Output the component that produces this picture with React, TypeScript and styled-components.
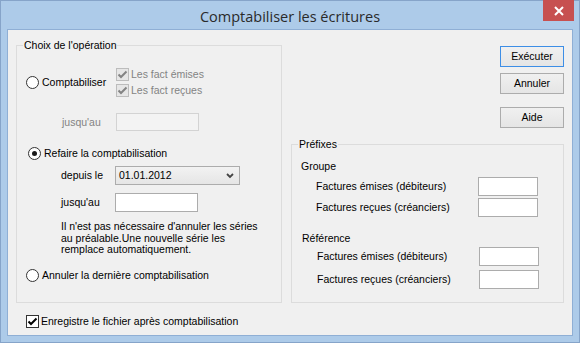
import React from 'react'
import styled, { createGlobalStyle } from 'styled-components'

const GlobalStyle = createGlobalStyle`
  html, body {
    margin: 0;
    padding: 0;
    background: #ffffff;
  }
  body {
    font-family: "Liberation Sans", Arial, sans-serif;
    font-size: 10.5px;
    color: #000;
  }
  * {
    box-sizing: border-box;
  }
`

const Window = styled.div`
  width: 580px;
  height: 343px;
  border: 1px solid #86a4c9;
  background: #adcbe9;
  padding: 0 6px 6px;
  display: flex;
  flex-direction: column;
`

const TitleBar = styled.div`
  position: relative;
  height: 28px;
  margin: 0 -6px;
  padding-top: 3px;
  display: flex;
  align-items: center;
  justify-content: center;
  font-family: "Open Sans", "Noto Sans", sans-serif;
  font-size: 14.5px;
  color: #2a2a2a;
`

const CloseButton = styled.div`
  position: absolute;
  top: -1px;
  right: 5px;
  width: 31px;
  height: 21px;
  background: #c75050;
  display: flex;
  align-items: center;
  justify-content: center;
`

const Body = styled.div`
  flex: 1;
  border: 1px solid #8fafd5;
  background: #f0f0f0;
  display: grid;
  grid-template-columns: 266px 273px;
  grid-template-rows: 258px auto;
  column-gap: 9px;
  padding: 15px 0 0 8px;
`

const GroupBox = styled.div<{ $padTop: number }>`
  position: relative;
  border: 1px solid #dcdcdc;
  padding-top: ${p => p.$padTop}px;
  display: flex;
  flex-direction: column;
`

const Caption = styled.span`
  position: absolute;
  top: -7px;
  left: 6px;
  padding: 0 1px;
  line-height: 13px;
  background: #f0f0f0;
`

const Row = styled.div<{ $mt?: number; $pl?: number; $h?: number }>`
  display: flex;
  align-items: center;
  margin-top: ${p => p.$mt ?? 0}px;
  padding-left: ${p => p.$pl ?? 0}px;
  height: ${p => p.$h ?? 16}px;
  line-height: 13px;
  white-space: nowrap;
`

const ChoiceCell = styled.div<{ $w: number; $pl: number }>`
  width: ${p => p.$w}px;
  padding-left: ${p => p.$pl}px;
  display: flex;
  align-items: center;
`

const CheckColumn = styled.div`
  display: flex;
  flex-direction: column;
`

const Label = styled.span<{ $w?: number; $disabled?: boolean }>`
  display: inline-block;
  width: ${p => (p.$w ? `${p.$w}px` : 'auto')};
  color: ${p => (p.$disabled ? '#838383' : '#000')};
  line-height: 13px;
`

const RadioCircle = styled.span<{ $checked?: boolean }>`
  width: 13px;
  height: 13px;
  border-radius: 50%;
  border: 1px solid #333;
  background: #fff;
  margin-right: 3px;
  display: flex;
  align-items: center;
  justify-content: center;
  flex: none;
  &::after {
    content: '';
    display: ${p => (p.$checked ? 'block' : 'none')};
    width: 5px;
    height: 5px;
    border-radius: 50%;
    background: #1a1a1a;
  }
`

const CheckBoxSquare = styled.span<{ $disabled?: boolean }>`
  width: 13px;
  height: 13px;
  border: 1px solid ${p => (p.$disabled ? '#bcbcbc' : '#333')};
  background: ${p => (p.$disabled ? '#e6e6e6' : '#fff')};
  margin-right: 2px;
  display: flex;
  align-items: center;
  justify-content: center;
  flex: none;
`

const TextBox = styled.div<{ $w: number; $disabled?: boolean }>`
  width: ${p => p.$w}px;
  height: 100%;
  border: 1px solid ${p => (p.$disabled ? '#d3d3d3' : '#acacac')};
  background: ${p => (p.$disabled ? '#f3f3f3' : '#fff')};
`

const Select = styled.div`
  width: 125px;
  height: 100%;
  border: 1px solid #acacac;
  background: linear-gradient(#f2f2f2, #e5e5e5);
  display: flex;
  align-items: center;
  justify-content: space-between;
  padding: 0 5px 0 3px;
`

const Note = styled.div`
  margin-top: 9px;
  padding-left: 44px;
  line-height: 11.7px;
  white-space: nowrap;
`

const RightColumn = styled.div`
  display: flex;
  flex-direction: column;
  align-items: flex-end;
`

const Button = styled.div<{ $mt: number; $focused?: boolean }>`
  width: 64px;
  height: 21px;
  margin-top: ${p => p.$mt}px;
  border: 1px solid ${p => (p.$focused ? '#3d8ee6' : '#acacac')};
  background: linear-gradient(#f0f0f0, #e5e5e5);
  display: flex;
  align-items: center;
  justify-content: center;
  line-height: 13px;
`

const PrefixBox = styled(GroupBox)`
  align-self: stretch;
  flex: 1;
  margin-top: 16px;
`

const SubTitle = styled.div<{ $mt: number; $pl: number }>`
  margin-top: ${p => p.$mt}px;
  padding-left: ${p => p.$pl}px;
  line-height: 13px;
`

const SaveRow = styled(Row)`
  grid-column: 1 / span 2;
  margin-top: 10px;
  padding-left: 10px;
`

const Check = ({ color }: { color: string }) => (
  <svg width="11" height="11" viewBox="0 0 11 11">
    <path d="M1.5 5.5 L4 8 L9.5 2.5" fill="none" stroke={color} strokeWidth="2" />
  </svg>
)

const Radio = ({ checked, label, pl }: { checked?: boolean; label: string; pl: number }) => (
  <Row $pl={pl}>
    <RadioCircle $checked={checked} />
    <Label>{label}</Label>
  </Row>
)

const CheckBox = ({ label, disabled }: { label: string; disabled?: boolean }) => (
  <Row>
    <CheckBoxSquare $disabled={disabled}>
      <Check color={disabled ? '#838383' : '#000'} />
    </CheckBoxSquare>
    <Label $disabled={disabled}>{label}</Label>
  </Row>
)

const PrefixRow = ({ label, mt, pl }: { label: string; mt: number; pl: number }) => (
  <Row $mt={mt} $pl={pl} $h={19}>
    <Label $w={162}>{label}</Label>
    <TextBox $w={60} />
  </Row>
)

const PrefixGroup = ({ title, mt, shift }: { title: string; mt: number; shift: number }) => (
  <>
    <SubTitle $mt={mt} $pl={9 + shift}>{title}</SubTitle>
    <PrefixRow label="Factures émises (débiteurs)" mt={4 - shift * 2} pl={24 + shift} />
    <PrefixRow label="Factures reçues (créanciers)" mt={shift ? 4 : 2} pl={24 + shift} />
  </>
)

export default function App() {
  return (
    <>
      <GlobalStyle />
      <Window>
        <TitleBar>
          Comptabiliser les écritures
          <CloseButton>
            <svg width="10" height="10" viewBox="0 0 10 10">
              <path d="M1 1 L9 9 M9 1 L1 9" stroke="#fff" strokeWidth="2" />
            </svg>
          </CloseButton>
        </TitleBar>
        <Body>
          <GroupBox $padTop={20}>
            <Caption>Choix de l'opération</Caption>
            <Row $h={32}>
              <ChoiceCell $w={99} $pl={9}>
                <RadioCircle />
                <Label>Comptabiliser</Label>
              </ChoiceCell>
              <CheckColumn>
                <CheckBox label="Les fact émises" disabled />
                <CheckBox label="Les fact reçues" disabled />
              </CheckColumn>
            </Row>
            <Row $mt={15} $pl={45} $h={18}>
              <Label $w={54} $disabled>jusqu'au</Label>
              <TextBox $w={83} $disabled />
            </Row>
            <Row $mt={14}>
              <ChoiceCell $w={200} $pl={11}>
                <RadioCircle $checked />
                <Label>Refaire la comptabilisation</Label>
              </ChoiceCell>
            </Row>
            <Row $mt={5} $pl={44} $h={19}>
              <Label $w={54}>depuis le</Label>
              <Select>
                <span>01.01.2012</span>
                <svg width="8" height="6" viewBox="0 0 8 6">
                  <path d="M1 1 L4 4 L7 1" fill="none" stroke="#444" strokeWidth="1.8" />
                </svg>
              </Select>
            </Row>
            <Row $mt={8} $pl={44} $h={19}>
              <Label $w={54}>jusqu'au</Label>
              <TextBox $w={83} />
            </Row>
            <Note>
              Il n'est pas nécessaire d'annuler les séries
              <br />
              au préalable.Une nouvelle série les
              <br />
              remplace automatiquement.
            </Note>
            <Row $mt={11}>
              <Radio label="Annuler la dernière comptabilisation" pl={9} />
            </Row>
          </GroupBox>
          <RightColumn>
            <Button $mt={1} $focused>Exécuter</Button>
            <Button $mt={6}>Annuler</Button>
            <Button $mt={13}>Aide</Button>
            <PrefixBox $padTop={15}>
              <Caption>Préfixes</Caption>
              <PrefixGroup title="Groupe" mt={0} shift={0} />
              <PrefixGroup title="Référence" mt={15} shift={1} />
            </PrefixBox>
          </RightColumn>
          <SaveRow>
            <CheckBoxSquare>
              <Check color="#000" />
            </CheckBoxSquare>
            <Label>Enregistre le fichier après comptabilisation</Label>
          </SaveRow>
        </Body>
      </Window>
    </>
  )
}
